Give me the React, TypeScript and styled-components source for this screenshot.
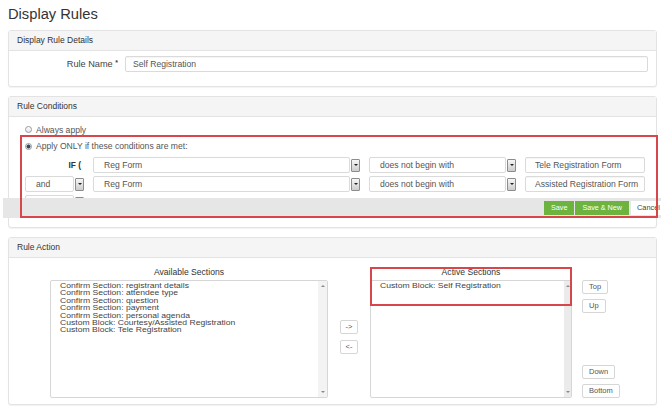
import styled, { createGlobalStyle } from 'styled-components';

const GlobalStyle = createGlobalStyle`
  html, body {
    margin: 0;
    padding: 0;
    background: #fff;
  }
  body {
    font-family: 'Liberation Sans', Arial, sans-serif;
    color: #555;
    overflow: hidden;
  }
  * {
    box-sizing: border-box;
  }
`;

const availableSections = [
  'Confirm Section: registrant details',
  'Confirm Section: attendee type',
  'Confirm Section: question',
  'Confirm Section: payment',
  'Confirm Section: personal agenda',
  'Custom Block: Courtesy/Assisted Registration',
  'Custom Block: Tele Registration',
];

const activeSections = ['Custom Block: Self Registration'];

const conditions = [
  { join: null, field: 'Reg Form', op: 'does not begin with', value: 'Tele Registration Form' },
  { join: 'and', field: 'Reg Form', op: 'does not begin with', value: 'Assisted Registration Form' },
];

function Select({ value }: { value: string }) {
  return (
    <S.Select>
      <S.SelectValue>{value}</S.SelectValue>
      <S.SelectArrow />
    </S.Select>
  );
}

function ListBox({ items, $bar, $track }: { items: string[]; $bar: number; $track: string }) {
  return (
    <S.ListBox>
      <S.ListItems>
        {items.map((item) => (
          <div key={item}>{item}</div>
        ))}
      </S.ListItems>
      <S.ScrollBar $w={$bar} $track={$track}>
        <S.ScrollArrow $up />
        <S.ScrollArrow />
      </S.ScrollBar>
    </S.ListBox>
  );
}

export default function App() {
  return (
    <>
      <GlobalStyle />
      <S.Page>
        <S.Title>Display Rules</S.Title>

        <S.Panel>
          <S.Heading>Display Rule Details</S.Heading>
          <S.DetailsBody>
            <S.FieldLabel>
              Rule Name <b>*</b>
            </S.FieldLabel>
            <S.TextBox>Self Registration</S.TextBox>
          </S.DetailsBody>
        </S.Panel>

        <S.Panel>
          <S.Heading>Rule Conditions</S.Heading>
          <S.ConditionsBody>
            <S.RadioLine $first>
              <S.Radio />
              Always apply
            </S.RadioLine>
            <S.Highlight>
              <S.RadioLine>
                <S.Radio $checked />
                Apply ONLY if these conditions are met:
              </S.RadioLine>
              <S.ConditionGrid>
                {conditions.map((c, i) => (
                  <S.ConditionRow key={i}>
                    {c.join ? <Select value={c.join} /> : <S.IfLabel>IF (</S.IfLabel>}
                    <Select value={c.field} />
                    <Select value={c.op} />
                    <S.TextBox $pad={9}>{c.value}</S.TextBox>
                  </S.ConditionRow>
                ))}
                <S.ConditionRow>
                  <Select value="" />
                </S.ConditionRow>
              </S.ConditionGrid>
              <S.Toolbar>
                <S.GreenButton>Save</S.GreenButton>
                <S.GreenButton>Save &amp; New</S.GreenButton>
                <S.CancelButton>Cancel</S.CancelButton>
              </S.Toolbar>
            </S.Highlight>
          </S.ConditionsBody>
        </S.Panel>

        <S.Panel>
          <S.Heading>Rule Action</S.Heading>
          <S.ActionBody>
            <S.Column>
              <S.ColumnTitle>Available Sections</S.ColumnTitle>
              <ListBox items={availableSections} $bar={9} $track="#f3f3f3" />
            </S.Column>
            <S.MoveColumn>
              <S.SmallButton $w={18}>-&gt;</S.SmallButton>
              <S.SmallButton $w={18}>&lt;-</S.SmallButton>
            </S.MoveColumn>
            <S.Column $callout>
              <S.ColumnTitle>Active Sections</S.ColumnTitle>
              <ListBox items={activeSections} $bar={7} $track="#ebebeb" />
            </S.Column>
            <S.OrderColumn>
              <S.ButtonGroup>
                <S.SmallButton>Top</S.SmallButton>
                <S.SmallButton>Up</S.SmallButton>
              </S.ButtonGroup>
              <S.ButtonGroup>
                <S.SmallButton>Down</S.SmallButton>
                <S.SmallButton>Bottom</S.SmallButton>
              </S.ButtonGroup>
            </S.OrderColumn>
          </S.ActionBody>
        </S.Panel>
      </S.Page>
    </>
  );
}

const S = {
  Page: styled.div`
    width: 666px;
    height: 415px;
    padding-left: 8px;
    overflow: hidden;
  `,
  Title: styled.h1`
    margin: 0;
    height: 30px;
    padding-top: 4px;
    font-size: 14.7px;
    line-height: 20px;
    font-weight: normal;
    color: #333;
  `,
  Panel: styled.section`
    width: 649px;
    border: 1px solid #e3e3e3;
    border-radius: 3px;
    background: #fff;
    box-shadow: 0 1px 1px rgba(0, 0, 0, 0.05);
    & + & {
      margin-top: 9px;
    }
  `,
  Heading: styled.div`
    height: 20px;
    padding-left: 8px;
    background: #f5f5f5;
    border-bottom: 1px solid #e3e3e3;
    font-size: 8.5px;
    line-height: 19px;
    color: #333;
  `,
  DetailsBody: styled.div`
    display: flex;
    align-items: center;
    gap: 7px;
    padding: 5px 8px 14px 0;
  `,
  FieldLabel: styled.div`
    width: 109px;
    text-align: right;
    font-size: 9.2px;
    color: #444;
    b {
      font-size: 7px;
      vertical-align: 2px;
    }
  `,
  TextBox: styled.div<{ $pad?: number }>`
    flex: 1;
    height: 16px;
    padding-left: ${(p) => p.$pad ?? 7}px;
    border: 1px solid #dadada;
    border-radius: 2px;
    box-shadow: inset 0 1px 1px rgba(0, 0, 0, 0.04);
    font-size: 8.6px;
    line-height: 14px;
    color: #555;
    white-space: nowrap;
    overflow: hidden;
  `,
  ConditionsBody: styled.div`
    padding: 7px 0 9px 11px;
  `,
  RadioLine: styled.div<{ $first?: boolean }>`
    display: flex;
    align-items: center;
    gap: 4px;
    height: ${(p) => (p.$first ? 11 : 12)}px;
    padding-left: ${(p) => (p.$first ? 5 : 0)}px;
    font-size: 8.6px;
    color: #555;
  `,
  Radio: styled.span<{ $checked?: boolean }>`
    width: 7px;
    height: 7px;
    border-radius: 50%;
    border: 1px solid #9a9a9a;
    background: ${(p) =>
      p.$checked ? 'radial-gradient(circle, #3b4a5a 0 1.8px, #dfe4ea 2.2px)' : 'linear-gradient(#fff, #e4e4e4)'};
  `,
  Highlight: styled.div`
    position: relative;
    margin: 0 -2px 0 0;
    padding: 5px 0 7px 5px;
    &::after {
      content: '';
      position: absolute;
      inset: 0;
      border: 2px solid #d6464a;
      z-index: 2;
      pointer-events: none;
    }
  `,
  ConditionGrid: styled.div`
    display: flex;
    flex-direction: column;
    gap: 3px;
    margin-top: 5px;
  `,
  ConditionRow: styled.div`
    display: grid;
    grid-template-columns: 59px 267px 147px 120px;
    column-gap: 9px;
    height: 16px;
  `,
  IfLabel: styled.div`
    padding-right: 3px;
    text-align: right;
    font-size: 8.4px;
    font-weight: bold;
    line-height: 16px;
    color: #333;
  `,
  Select: styled.div`
    display: flex;
    align-items: center;
    gap: 1px;
  `,
  SelectValue: styled.div`
    flex: 1;
    height: 16px;
    padding-left: 10px;
    border: 1px solid #dadada;
    border-radius: 2px;
    font-size: 8.6px;
    line-height: 14px;
    color: #555;
    white-space: nowrap;
  `,
  SelectArrow: styled.div`
    width: 9px;
    height: 13px;
    border: 1px solid #8c8c8c;
    border-radius: 1px;
    background: linear-gradient(#f6f6f6, #cdcdcd);
    display: flex;
    align-items: center;
    justify-content: center;
    &::before {
      content: '';
      border-left: 2px solid transparent;
      border-right: 2px solid transparent;
      border-top: 2px solid #222;
    }
  `,
  Toolbar: styled.div`
    position: absolute;
    left: -17px;
    right: -3px;
    bottom: 0;
    height: 20px;
    z-index: 1;
    display: flex;
    align-items: center;
    justify-content: flex-end;
    gap: 1px;
    background: #e6e6e6;
    overflow: hidden;
  `,
  GreenButton: styled.div`
    height: 14px;
    padding: 0 7px;
    background: #6db33f;
    color: #fff;
    font-size: 7.2px;
    line-height: 14px;
    white-space: nowrap;
  `,
  CancelButton: styled.div`
    width: 30px;
    height: 14px;
    margin-left: 1px;
    padding-left: 6px;
    background: #fff;
    color: #444;
    font-size: 7.4px;
    line-height: 14px;
    white-space: nowrap;
    overflow: hidden;
  `,
  ActionBody: styled.div`
    display: grid;
    grid-template-columns: 278px 18px 202px 38px;
    column-gap: 12px;
    padding: 9px 0 6px 41px;
  `,
  Column: styled.div<{ $callout?: boolean }>`
    position: relative;
    &::after {
      content: '';
      display: ${(p) => (p.$callout ? 'block' : 'none')};
      position: absolute;
      top: 0;
      left: 0;
      right: 0;
      height: 35px;
      border: 2px solid #d6464a;
      pointer-events: none;
    }
  `,
  ColumnTitle: styled.div`
    height: 13px;
    text-align: center;
    font-size: 8.6px;
    line-height: 11px;
    color: #333;
  `,
  ListBox: styled.div`
    display: flex;
    height: 118px;
    border: 1px solid #d6d6d6;
    border-radius: 2px;
  `,
  ListItems: styled.div`
    flex: 1;
    padding: 2px 0 0 9px;
    font-size: 8.6px;
    line-height: 9.9px;
    color: #444;
    white-space: nowrap;
    transform: scaleY(0.75);
    transform-origin: top left;
  `,
  ScrollBar: styled.div<{ $w: number; $track: string }>`
    width: ${(p) => p.$w}px;
    background: ${(p) => p.$track};
    display: flex;
    flex-direction: column;
    justify-content: space-between;
    align-items: center;
    padding: 4px 0;
  `,
  ScrollArrow: styled.span<{ $up?: boolean }>`
    border-left: 2px solid transparent;
    border-right: 2px solid transparent;
    ${(p) => (p.$up ? 'border-bottom: 2px solid #8a8a8a;' : 'border-top: 2px solid #8a8a8a;')}
  `,
  MoveColumn: styled.div`
    display: flex;
    flex-direction: column;
    gap: 6px;
    padding-top: 53px;
  `,
  OrderColumn: styled.div`
    display: flex;
    flex-direction: column;
    justify-content: space-between;
    margin-left: -2px;
    padding-top: 13px;
  `,
  ButtonGroup: styled.div`
    display: flex;
    flex-direction: column;
    align-items: flex-start;
    gap: 5px;
  `,
  SmallButton: styled.div<{ $w?: number }>`
    ${(p) => (p.$w ? `width: ${p.$w}px;` : '')}
    height: 14px;
    padding: 0 6px;
    border: 1px solid #d6d6d6;
    border-radius: 2px;
    background: #fff;
    font-size: 7.5px;
    line-height: 12px;
    text-align: center;
    color: #555;
    white-space: nowrap;
    display: flex;
    align-items: center;
    justify-content: center;
  `,
};
